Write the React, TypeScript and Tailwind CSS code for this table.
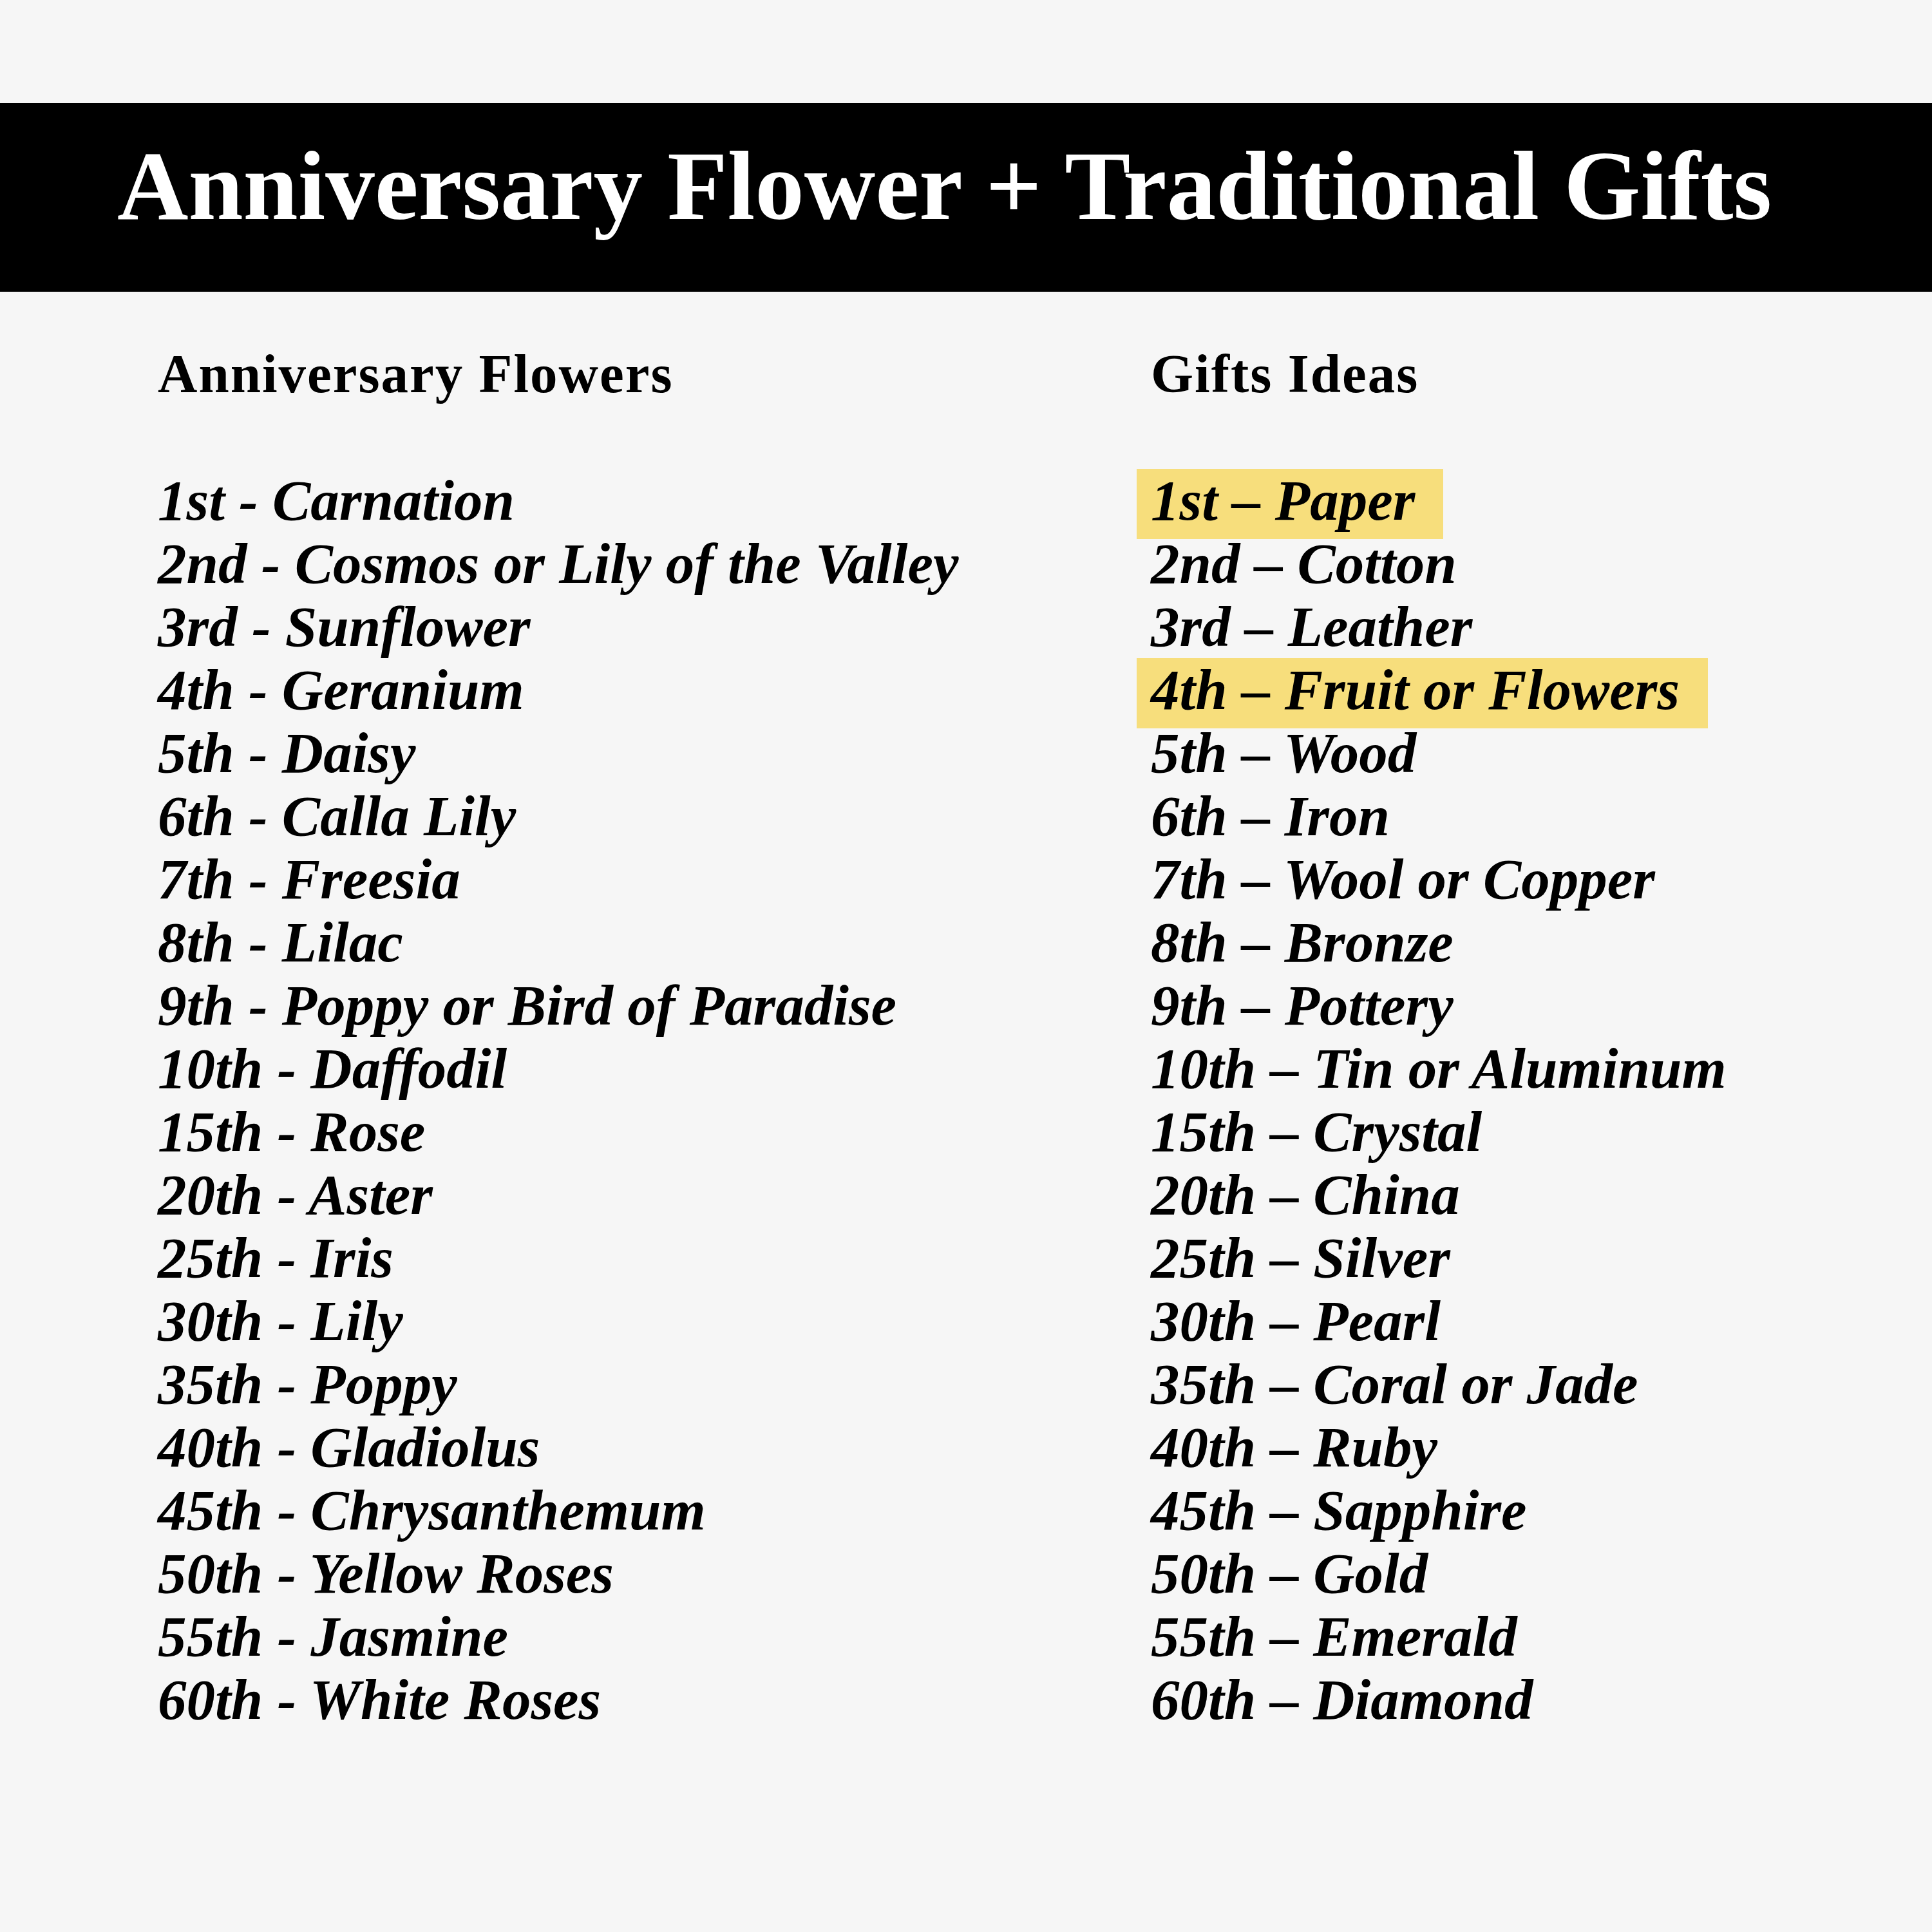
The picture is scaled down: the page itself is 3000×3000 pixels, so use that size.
const FLOWERS = [
  "1st - Carnation",
  "2nd - Cosmos or Lily of the Valley",
  "3rd - Sunflower",
  "4th - Geranium",
  "5th - Daisy",
  "6th - Calla Lily",
  "7th - Freesia",
  "8th - Lilac",
  "9th - Poppy or Bird of Paradise",
  "10th - Daffodil",
  "15th - Rose",
  "20th - Aster",
  "25th - Iris",
  "30th - Lily",
  "35th - Poppy",
  "40th - Gladiolus",
  "45th - Chrysanthemum",
  "50th - Yellow Roses",
  "55th - Jasmine",
  "60th - White Roses",
];

const GIFTS = [
  { text: "1st – Paper", hl: true },
  { text: "2nd – Cotton" },
  { text: "3rd – Leather" },
  { text: "4th – Fruit or Flowers", hl: true },
  { text: "5th – Wood" },
  { text: "6th – Iron" },
  { text: "7th – Wool or Copper" },
  { text: "8th – Bronze" },
  { text: "9th – Pottery" },
  { text: "10th – Tin or Aluminum" },
  { text: "15th – Crystal" },
  { text: "20th – China" },
  { text: "25th – Silver" },
  { text: "30th – Pearl" },
  { text: "35th – Coral or Jade" },
  { text: "40th – Ruby" },
  { text: "45th – Sapphire" },
  { text: "50th – Gold" },
  { text: "55th – Emerald" },
  { text: "60th – Diamond" },
];

const serif = "font-['Liberation_Serif',serif]";

function Row({ text, hl }: { text: string; hl?: boolean }) {
  if (!hl) {
    return <div className="h-[98px] leading-[98px] whitespace-nowrap">{text}</div>;
  }
  return (
    <div className="h-[98px] leading-[98px] whitespace-nowrap">
      <span className="relative inline-block">
        <span className="absolute -left-[22px] -right-[44px] top-0 h-[109px] bg-[#f7de7c]" />
        <span className="relative">{text}</span>
      </span>
    </div>
  );
}

export default function App() {
  return (
    <main className={`w-[3000px] h-[3000px] bg-[#f6f6f6] text-black pt-[160px] ${serif}`}>
      <header className="h-[293px] bg-black pt-[52px] pl-[182px]">
        <h1 className="text-[153px] leading-[153px] font-bold text-white whitespace-nowrap">
          Anniversary Flower + Traditional Gifts
        </h1>
      </header>

      <section className="flex pl-[245px] pt-[78px]">
        <div className="w-[1542px]">
          <h2 className="h-[98px] leading-[98px] text-[85px] tracking-[2px] font-bold">Anniversary Flowers</h2>
          <div className="mt-[99px] text-[89px] italic font-bold">
            {FLOWERS.map((f) => (
              <Row key={f} text={f} />
            ))}
          </div>
        </div>

        <div>
          <h2 className="h-[98px] leading-[98px] text-[85px] tracking-[2px] font-bold">Gifts Ideas</h2>
          <div className="mt-[99px] text-[89px] italic font-bold">
            {GIFTS.map((g) => (
              <Row key={g.text} text={g.text} hl={g.hl} />
            ))}
          </div>
        </div>
      </section>
    </main>
  );
}
